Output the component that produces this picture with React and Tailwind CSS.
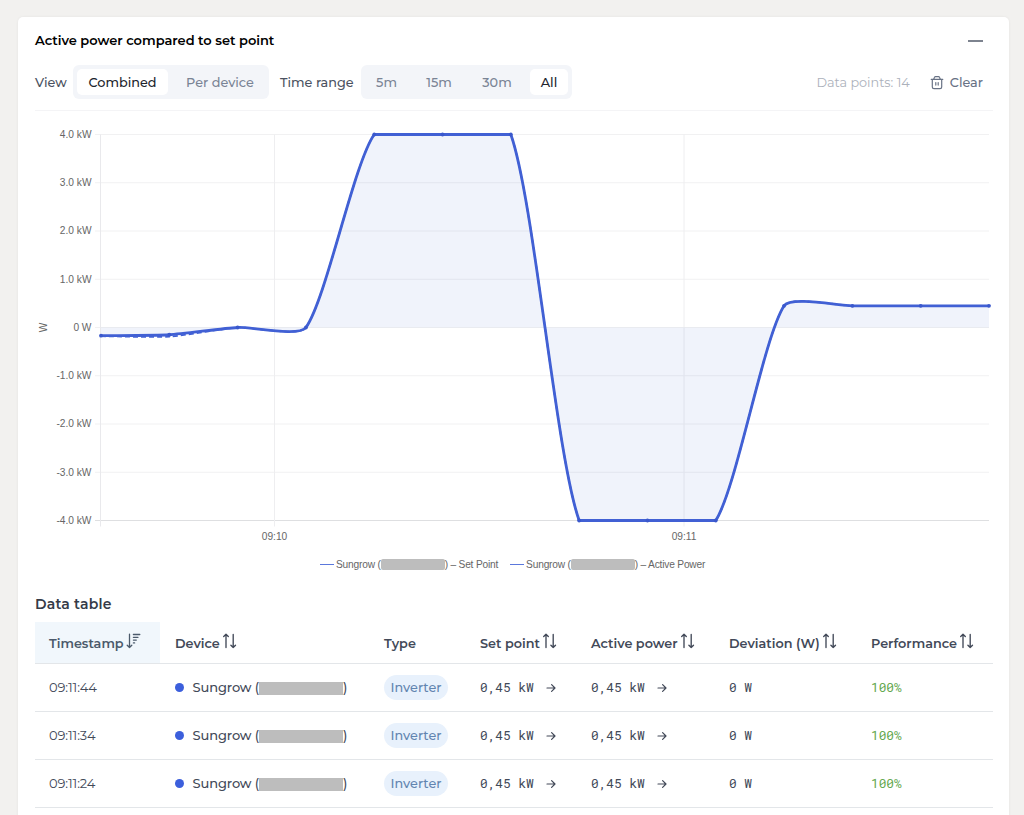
// src/components/ActivePowerPanel.jsx
import React, { useState } from 'react'

const LINE_COLOR = '#4160d4'
const AREA = { left: 66, right: 954, top: 23.5, bottom: 409.5 }
const TENSION = 0.2

// values in kW, one sample every 10 seconds
const setPoint = [-0.17, -0.15, 0, 0, 4, 4, 4, -4, -4, -4, 0.45, 0.45, 0.45, 0.45]
const activePower = [-0.18, -0.19, 0, 0, 4, 4, 4, -4, -4, -4, 0.45, 0.45, 0.45, 0.45]

const yTicks = [4, 3, 2, 1, 0, -1, -2, -3, -4]
const xTicks = [
  { label: '09:10', x: 239.5 },
  { label: '09:11', x: 649 }
]

const rows = [
  { time: '09:11:44', setPoint: '0,45 kW', power: '0,45 kW', deviation: '0 W', performance: '100%' },
  { time: '09:11:34', setPoint: '0,45 kW', power: '0,45 kW', deviation: '0 W', performance: '100%' },
  { time: '09:11:24', setPoint: '0,45 kW', power: '0,45 kW', deviation: '0 W', performance: '100%' }
]

const yFor = (v) => AREA.top + ((4 - v) / 8) * (AREA.bottom - AREA.top)

const toPoints = (values) =>
  values.map((v, i) => ({
    x: AREA.left + (i / (values.length - 1)) * (AREA.right - AREA.left),
    y: yFor(v)
  }))

const clampY = (y) => Math.min(AREA.bottom, Math.max(AREA.top, y))

// Smooth curve, control points are kept inside of the chart area
const curvePath = (pts) => {
  const controls = pts.map((p, i) => {
    const prev = pts[i - 1] || p
    const next = pts[i + 1] || p
    const d01 = Math.hypot(p.x - prev.x, p.y - prev.y)
    const d12 = Math.hypot(next.x - p.x, next.y - p.y)
    const fa = (TENSION * d01) / (d01 + d12)
    const fb = (TENSION * d12) / (d01 + d12)
    return {
      inX: p.x - fa * (next.x - prev.x),
      inY: clampY(p.y - fa * (next.y - prev.y)),
      outX: p.x + fb * (next.x - prev.x),
      outY: clampY(p.y + fb * (next.y - prev.y))
    }
  })

  return pts.reduce((d, p, i) => {
    if (i === 0) return `M${p.x} ${p.y}`
    const a = controls[i - 1]
    const b = controls[i]
    return `${d} C${a.outX} ${a.outY} ${b.inX} ${b.inY} ${p.x} ${p.y}`
  }, '')
}

const formatTick = (v) => (v === 0 ? '0 W' : `${v.toFixed(1)} kW`)

const TrashIcon = () => (
  <svg className="w-[14px] h-[14px]" viewBox="0 0 14 14" fill="none" stroke="currentColor" strokeWidth="1.2" strokeLinecap="round" strokeLinejoin="round">
    <path d="M1.2 3.3h11.6M3.7 3.1l.9-1.9q.2-.5.8-.5h3.2q.6 0 .8.5l.9 1.9M2.3 3.4v7.5q0 1.7 1.7 1.7h6q1.7 0 1.7-1.7V3.4M5.8 6.5v2.6M8.2 6.5v2.6" />
  </svg>
)

const SortIcon = () => (
  <svg className="w-[15px] h-[16px]" viewBox="0 0 15 16" fill="none" stroke="currentColor" strokeWidth="1.35" strokeLinecap="round" strokeLinejoin="round">
    <path d="M4 14.6V1.4M1.7 3.6L4 1.3l2.3 2.3M11.2 1.4v13.2M8.9 12.3l2.3 2.3 2.3-2.3" />
  </svg>
)

const SortDownIcon = () => (
  <svg className="w-[15px] h-[16px]" viewBox="0 0 15 16" fill="none" stroke="currentColor" strokeWidth="1.3" strokeLinecap="round" strokeLinejoin="round">
    <path d="M3.5 1.2v13.3M1.2 12.2l2.3 2.3 2.3-2.3M7.4 1.5h6.4M7.4 4.3h4.6M7.4 7.1h2.9M7.4 9.9h1.2" />
  </svg>
)

const ArrowIcon = () => (
  <svg className="w-[10px] h-[10px]" viewBox="0 0 10 10" fill="none" stroke="currentColor" strokeWidth="1.2" strokeLinecap="round" strokeLinejoin="round">
    <path d="M1 5h8M5.6 1.6L9 5 5.6 8.4" />
  </svg>
)

const Segmented = ({ options, value, onChange }) => (
  <div className="flex h-[34px] items-center rounded-md bg-[#f3f5f9] p-[4px]">
    {options.map((o) => (
      <button
        key={o.label}
        onClick={() => onChange(o.label)}
        className={`h-[26px] rounded-[5px] pt-px text-center font-medium ${o.className} ${value === o.label ? 'bg-white text-[#20242c]' : 'text-[#7a8495]'}`}
      >
        {o.label}
      </button>
    ))}
  </div>
)

const PowerChart = () => {
  const setPts = toPoints(setPoint)
  const powerPts = toPoints(activePower)
  const zero = yFor(0)
  const line = curvePath(setPts)

  return (
    <svg className="block h-[440px] w-[958px]" viewBox="0 0 958 440" fontFamily="'Liberation Sans', sans-serif" fontSize="10.2" fill="#666">
      {yTicks.map((v) => (
        <g key={v}>
          <line x1="60" x2={AREA.right} y1={yFor(v)} y2={yFor(v)} stroke={v === -4 ? '#dedfe1' : '#f1f1f2'} />
          <text x="56.5" y={yFor(v) + 3.4} textAnchor="end">{formatTick(v)}</text>
        </g>
      ))}
      {xTicks.map((t) => (
        <g key={t.label}>
          <line x1={t.x} x2={t.x} y1={AREA.top} y2={AREA.bottom + 6} stroke="#eeeef0" />
          <text x={t.x} y="429" textAnchor="middle">{t.label}</text>
        </g>
      ))}
      <line x1="65.5" x2="65.5" y1={AREA.top} y2={AREA.bottom + 6} stroke="#e9e9ec" />
      <text transform="translate(12 216.5) rotate(-90)" textAnchor="middle">W</text>

      <path d={`${line} L${AREA.right} ${zero} L${AREA.left} ${zero} Z`} fill="#3c64c8" fillOpacity="0.08" />
      <path d={curvePath(powerPts)} fill="none" stroke={LINE_COLOR} strokeWidth="1.8" strokeDasharray="5 3" />
      <path d={line} fill="none" stroke={LINE_COLOR} strokeWidth="2.8" strokeLinejoin="round" />
      {setPts.map((p) => (
        <circle key={p.x} cx={p.x} cy={p.y} r="1.9" fill="#3a58cc" />
      ))}
    </svg>
  )
}

const LegendItem = ({ name }) => (
  <div className="flex items-center whitespace-nowrap">
    <span className="mr-[2px] h-px w-[14px] bg-[#5b78dc]" />
    <span>Sungrow (</span>
    <span className="h-[11px] w-[64px] rounded-[2px] bg-[#bdbdbd]" />
    <span>) – {name}</span>
  </div>
)

const HeaderCell = ({ label, className, icon }) => (
  <th className={`h-[41px] pt-[2px] pl-[14px] text-left text-[12.8px] font-semibold ${className}`}>
    <div className="flex items-center whitespace-nowrap">
      <span>{label}</span>
      {icon && <span className="mb-[5px] ml-[2.5px]">{icon}</span>}
    </div>
  </th>
)

const App = () => {
  const [view, setView] = useState('Combined')
  const [range, setRange] = useState('All')

  return (
    <div className="h-[815px] overflow-hidden bg-[#f2f1ef] pt-[17px] pl-[18px] font-['Montserrat','Inter',sans-serif] text-[13px] text-[#4b5261]">
      <div className="h-[820px] w-[991px] rounded-[5px] bg-white pl-[17px] shadow-[0_0_3px_rgba(0,0,0,0.06)]">

        {/* Title */}
        <div className="flex h-[48px] w-[948px] items-center justify-between">
          <h2 className="text-[13px] font-semibold tracking-[-0.03px] text-black">Active power compared to set point</h2>
          <span className="h-[2px] w-[15px] bg-[#7d838f]" />
        </div>

        {/* Toolbar */}
        <div className="flex h-[34px] w-[948px] items-center text-[12.8px]">
          <span className="w-[38px] pt-px font-medium">View</span>
          <Segmented
            value={view}
            onChange={setView}
            options={[
              { label: 'Combined', className: 'w-[91px]' },
              { label: 'Per device', className: 'w-[97px] pl-[7px]' }
            ]}
          />
          <span className="ml-[11px] w-[81px] pt-px font-medium whitespace-nowrap">Time range</span>
          <Segmented
            value={range}
            onChange={setRange}
            options={[
              { label: '5m', className: 'w-[43px]' },
              { label: '15m', className: 'w-[62px]' },
              { label: '30m', className: 'w-[60px] pr-[6px]' },
              { label: 'All', className: 'w-[38px]' }
            ]}
          />
          <span className="ml-auto pt-px text-[#acb1bb]">Data points: 14</span>
          <button className="ml-[20px] flex items-center gap-[6px] pt-px font-medium text-[#687285]">
            <TrashIcon />
            Clear
          </button>
        </div>

        <div className="mt-[11px] w-[958px] border-t border-[#f4f4f6]" />

        <PowerChart />

        {/* Legend */}
        <div className="ml-[285px] flex h-[27px] items-center gap-[12px] font-['Liberation_Sans',sans-serif] text-[10.2px] tracking-[-0.2px] text-[#666]">
          <LegendItem name="Set Point" />
          <LegendItem name="Active Power" />
        </div>

        {/* Data table */}
        <h3 className="mt-[16px] h-[28px] text-[14px] leading-[20px] font-semibold tracking-[0.2px] text-[#353b48]">Data table</h3>

        <table className="w-[958px] table-fixed border-collapse text-[#424958]">
          <thead>
            <tr className="border-b border-[#e3e6e9]">
              <HeaderCell label="Timestamp" className="w-[125px] bg-[#f1f7fc] text-[#4b5a6b]" icon={<SortDownIcon />} />
              <HeaderCell label="Device" className="w-[210px] pl-[15px]!" icon={<SortIcon />} />
              <HeaderCell label="Type" className="w-[96px]" />
              <HeaderCell label="Set point" className="w-[111px]" icon={<SortIcon />} />
              <HeaderCell label="Active power" className="w-[138px]" icon={<SortIcon />} />
              <HeaderCell label="Deviation (W)" className="w-[142px]" icon={<SortIcon />} />
              <HeaderCell label="Performance" className="w-[136px]" icon={<SortIcon />} />
            </tr>
          </thead>
          <tbody>
            {rows.map((r) => (
              <tr key={r.time} className="h-[48px] border-b border-[#e3e6e9]">
                <td className="pt-[2px] pl-[14px] tracking-[-0.1px]">{r.time}</td>
                <td className="pt-[2px] pl-[14.5px]">
                  <div className="flex items-center font-medium whitespace-nowrap">
                    <span className="mr-[9px] mb-px h-[9px] w-[9px] rounded-full bg-[#3c5fdc]" />
                    <span className="tracking-[-0.1px]">Sungrow (</span>
                    <span className="h-[13px] w-[84px] bg-[#bdbdbd]" />
                    <span>)</span>
                  </div>
                </td>
                <td className="pl-[14px]">
                  <span className="flex h-[25px] w-[64px] items-center justify-center rounded-full bg-[#e8f1fc] pt-px text-[12.8px] font-medium text-[#6285b0]">Inverter</span>
                </td>
                <td className="pt-[2px] pl-[14px]">
                  <div className="flex items-center gap-[12px] font-['Roboto_Mono','DejaVu_Sans_Mono',monospace] text-[12.8px] whitespace-nowrap">
                    {r.setPoint}
                    <ArrowIcon />
                  </div>
                </td>
                <td className="pt-[2px] pl-[14px]">
                  <div className="flex items-center gap-[12px] font-['Roboto_Mono','DejaVu_Sans_Mono',monospace] text-[12.8px] whitespace-nowrap">
                    {r.power}
                    <ArrowIcon />
                  </div>
                </td>
                <td className="pt-[2px] pl-[14px] font-['Roboto_Mono','DejaVu_Sans_Mono',monospace] text-[12.8px]">{r.deviation}</td>
                <td className="pt-[2px] pl-[14px] font-['Roboto_Mono','DejaVu_Sans_Mono',monospace] text-[12.8px] text-[#64a850]">{r.performance}</td>
              </tr>
            ))}
          </tbody>
        </table>
      </div>
    </div>
  )
}

export default App
